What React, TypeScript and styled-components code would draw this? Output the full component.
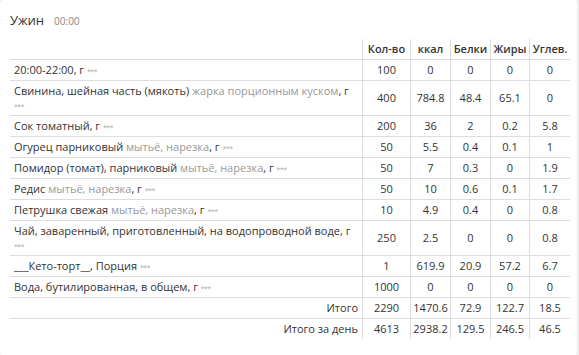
import React from "react";
import styled, { createGlobalStyle } from "styled-components";

const GlobalStyle = createGlobalStyle`
    body {
        margin: 0;
        background-color: #eeeeee;
        font-family: "Open Sans", "Noto Sans", sans-serif;
        color: #333333;
    }
`;

const Card = styled.div`
    width: 577px;
    box-sizing: border-box;
    background-color: #ffffff;
    border-radius: 4px;
    padding: 11px 7px 17px 10px;
`;

const TitleRow = styled.div`
    display: flex;
    align-items: baseline;
    gap: 10px;
    height: 28px;
`;

const Title = styled.span`
    font-size: 13px;
    color: #333333;
`;

const Time = styled.span`
    font-size: 10px;
    color: #888888;
`;

const Table = styled.table`
    width: 560px;
    border-collapse: collapse;
    table-layout: fixed;
    font-size: 11px;
    line-height: 14px;
`;

const HeadCell = styled.th<{ $w?: number }>`
    width: ${(p) => (p.$w ? `${p.$w}px` : "auto")};
    padding: 3px 0;
    font-weight: 600;
    color: #333333;
    text-align: center;
    border-left: 1px solid #dddddd;
    border-bottom: 1px solid #dddddd;

    &:first-child {
        border-left: none;
    }
`;

const Row = styled.tr<{ $last?: boolean }>`
    border-bottom: ${(p) => (p.$last ? "none" : "1px solid #dddddd")};
`;

const NameCell = styled.td<{ $right?: boolean }>`
    padding: 3px 4px;
    text-align: ${(p) => (p.$right ? "right" : "left")};
    color: #333333;
`;

const NumCell = styled.td`
    padding: 3px 0;
    text-align: center;
    border-left: 1px solid #dddddd;
    color: #333333;
`;

const Method = styled.span`
    color: #999999;
`;

const Dots = styled.span`
    font-size: 7px;
    line-height: 0;
    color: #aaaaaa;
    letter-spacing: -0.5px;
`;

type Item = {
    name: string;
    method?: string;
    unit: string;
    values: (number | string)[];
};

const items: Item[] = [
    { name: "20:00-22:00", unit: ", г", values: [100, 0, 0, 0, 0] },
    { name: "Свинина, шейная часть (мякоть)", method: "жарка порционным куском", unit: ", г", values: [400, 784.8, 48.4, 65.1, 0] },
    { name: "Сок томатный", unit: ", г", values: [200, 36, 2, 0.2, 5.8] },
    { name: "Огурец парниковый", method: "мытьё, нарезка", unit: ", г", values: [50, 5.5, 0.4, 0.1, 1] },
    { name: "Помидор (томат), парниковый", method: "мытьё, нарезка", unit: ", г", values: [50, 7, 0.3, 0, 1.9] },
    { name: "Редис", method: "мытьё, нарезка", unit: ", г", values: [50, 10, 0.6, 0.1, 1.7] },
    { name: "Петрушка свежая", method: "мытьё, нарезка", unit: ", г", values: [10, 4.9, 0.4, 0, 0.8] },
    { name: "Чай, заваренный, приготовленный, на водопроводной воде", unit: ", г", values: [250, 2.5, 0, 0, 0.8] },
    { name: "___Кето-торт__", unit: ", Порция", values: [1, 619.9, 20.9, 57.2, 6.7] },
    { name: "Вода, бутилированная, в общем", unit: ", г", values: [1000, 0, 0, 0, 0] },
];

const totals = [
    { label: "Итого", values: [2290, 1470.6, 72.9, 122.7, 18.5] },
    { label: "Итого за день", values: [4613, 2938.2, 129.5, 246.5, 46.5] },
];

export default function App() {
    return (
        <>
            <GlobalStyle />
            <Card>
                <TitleRow>
                    <Title>Ужин</Title>
                    <Time>00:00</Time>
                </TitleRow>
                <Table>
                    <thead>
                        <tr>
                            <HeadCell />
                            <HeadCell $w={47}>Кол-во</HeadCell>
                            <HeadCell $w={39}>ккал</HeadCell>
                            <HeadCell $w={39}>Белки</HeadCell>
                            <HeadCell $w={38}>Жиры</HeadCell>
                            <HeadCell $w={40}>Углев.</HeadCell>
                        </tr>
                    </thead>
                    <tbody>
                        {items.map((item, i) => (
                            <Row key={i}>
                                <NameCell>
                                    {item.name}
                                    {item.method && <Method> {item.method}</Method>}
                                    {item.unit} <Dots>***</Dots>
                                </NameCell>
                                {item.values.map((v, j) => (
                                    <NumCell key={j}>{v}</NumCell>
                                ))}
                            </Row>
                        ))}
                        {totals.map((t, i) => (
                            <Row key={t.label} $last={i === totals.length - 1}>
                                <NameCell $right>{t.label}</NameCell>
                                {t.values.map((v, j) => (
                                    <NumCell key={j}>{v}</NumCell>
                                ))}
                            </Row>
                        ))}
                    </tbody>
                </Table>
            </Card>
        </>
    );
}
